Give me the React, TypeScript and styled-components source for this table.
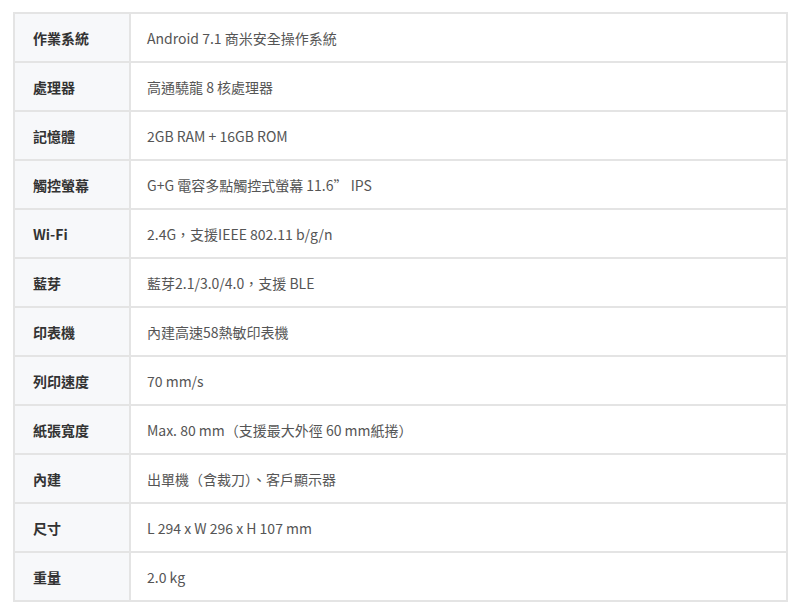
import React from 'react'
import styled, { createGlobalStyle } from 'styled-components'

const GlobalStyle = createGlobalStyle`
    html, body {
        margin: 0;
        padding: 0;
        background: #ffffff;
    }
    body {
        font-family: "Noto Sans CJK TC", "Noto Sans", sans-serif;
    }
`

const Page = styled.div`
    padding: 12px 12px 0 13px;
`

const SpecTable = styled.table`
    width: 775px;
    border-collapse: collapse;
    table-layout: fixed;
    font-size: 14px;
    line-height: 20px;
`

const LabelCell = styled.th`
    width: 79px;
    height: 47px;
    padding: 0 17px 0 18px;
    text-align: left;
    font-weight: 700;
    color: #333333;
    background: #f7f8fa;
    border: 2px solid #e4e4e4;
`

const ValueCell = styled.td`
    height: 47px;
    padding: 0 16px;
    color: #555555;
    background: #ffffff;
    border: 2px solid #e4e4e4;
    font-feature-settings: "palt" 0;
`

const specs: [string, string][] = [
    ['作業系統', 'Android 7.1 商米安全操作系統'],
    ['處理器', '高通驍龍 8 核處理器'],
    ['記憶體', '2GB RAM + 16GB ROM'],
    ['觸控螢幕', 'G+G 電容多點觸控式螢幕 11.6” IPS'],
    ['Wi-Fi', '2.4G，支援IEEE 802.11 b/g/n'],
    ['藍芽', '藍芽2.1/3.0/4.0，支援 BLE'],
    ['印表機', '內建高速58熱敏印表機'],
    ['列印速度', '70 mm/s'],
    ['紙張寬度', 'Max. 80 mm（支援最大外徑 60 mm紙捲）'],
    ['內建', '出單機（含裁刀）、客戶顯示器'],
    ['尺寸', 'L 294 x W 296 x H 107 mm'],
    ['重量', '2.0 kg'],
]

const App = () => {
    return (
        <Page>
            <GlobalStyle />
            <SpecTable>
                <tbody>
                    {specs.map(([label, value]) => (
                        <tr key={label}>
                            <LabelCell>{label}</LabelCell>
                            <ValueCell>{value}</ValueCell>
                        </tr>
                    ))}
                </tbody>
            </SpecTable>
        </Page>
    )
}

export default App
